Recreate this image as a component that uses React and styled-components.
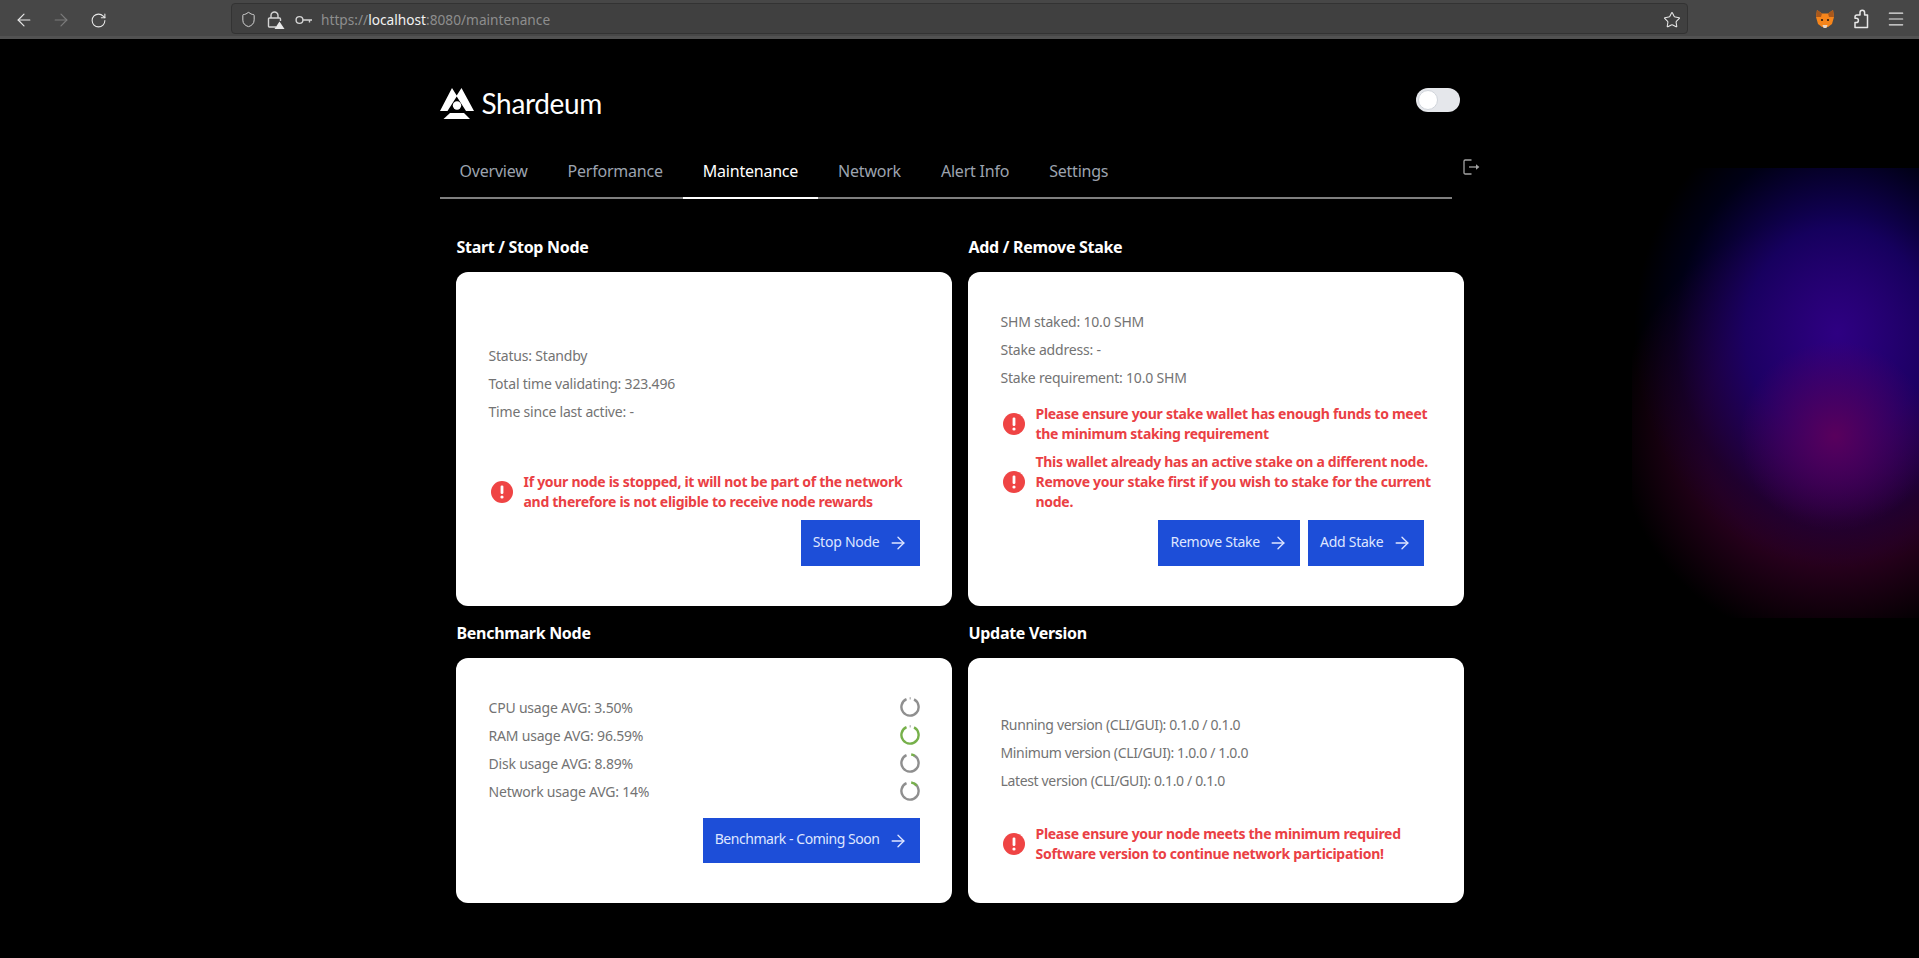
import React from 'react';
import styled, { createGlobalStyle } from 'styled-components';
import { ArrowLeft, ArrowRight, RotateCw, Shield, Star, Menu } from 'lucide-react';

const GlobalStyle = createGlobalStyle`
  html, body {
    margin: 0;
    padding: 0;
    background: #000;
    overflow: hidden;
  }
  body {
    font-family: "Noto Sans", "Open Sans", sans-serif;
    font-size: 14px;
  }
  * { box-sizing: border-box; }
`;

const Page = styled.div`
  position: relative;
  width: 100%;
  height: 958px;
  overflow: hidden;
  background: #000;
`;

const Glow = styled.div`
  position: absolute;
  left: 1632px;
  top: 168px;
  width: 420px;
  height: 450px;
  background:
    radial-gradient(circle 95px at 203px 268px, rgba(92, 0, 92, 0.95) 0%, rgba(80, 0, 100, 0) 100%),
    radial-gradient(ellipse 203px 235px at 205px 165px, #2e0082 0%, rgba(24, 0, 115, 0.8) 45%, rgba(0, 0, 70, 0.3) 80%, rgba(0, 0, 50, 0) 100%),
    radial-gradient(ellipse 215px 215px at 200px 262px, rgba(66, 0, 62, 0.95) 0%, rgba(46, 0, 34, 0.9) 60%, rgba(30, 0, 20, 0.55) 85%, rgba(16, 0, 10, 0) 100%);
`;

const BrowserBar = styled.div`
  position: relative;
  height: 39px;
  background: #474747;
  border-bottom: 3px solid #525252;
  display: flex;
  align-items: center;
`;

const NavIcons = styled.div`
  display: flex;
  align-items: center;
  gap: 17px;
  width: 231px;
  padding-left: 14px;
  margin-top: 4px;
`;

const ChromeIcon = styled.span`
  display: flex;
  width: 20px;
  height: 20px;
  align-items: center;
  justify-content: center;
  color: ${p => (p.$dim ? '#7c7c7c' : '#e8e8e8')};
`;

const UrlBar = styled.div`
  width: 1457px;
  height: 31px;
  background: #404040;
  border: 1px solid #333;
  border-radius: 4px;
  display: flex;
  align-items: center;
  padding: 3px 5px 0 8px;
  color: #a8a8a8;
`;

const UrlIcons = styled.div`
  display: flex;
  align-items: center;
  gap: 10px;
  width: 81px;
  color: #d4d4d4;
`;

const UrlText = styled.div`
  flex: 1;
  font-size: 13.7px;
  color: #8e8e8e;
  white-space: nowrap;
  b {
    font-weight: 400;
    color: #f2f2f2;
  }
`;

const Extensions = styled.div`
  flex: 1;
  display: flex;
  justify-content: flex-end;
  align-items: center;
  gap: 16px;
  padding-right: 13px;
  margin-top: 2px;
`;

const Shell = styled.main`
  position: relative;
  width: 1040px;
  margin: 0 auto;
`;

const Header = styled.header`
  display: flex;
  justify-content: space-between;
  align-items: flex-start;
  padding: 49px 20px 0 0;
  height: 106px;
`;

const Brand = styled.div`
  display: flex;
  align-items: center;
  gap: 8px;
  height: 31px;
`;

const BrandName = styled.span`
  font-family: "Lato", sans-serif;
  font-size: 28px;
  line-height: 28px;
  font-weight: 400;
  color: #fff;
  letter-spacing: -0.35px;
  margin-top: -2px;
`;

const Toggle = styled.div`
  width: 44px;
  height: 24px;
  border-radius: 12px;
  background: #e5e7eb;
  padding: 2px;
`;

const Knob = styled.div`
  width: 20px;
  height: 20px;
  border-radius: 50%;
  background: #fff;
  border: 1px solid #d1d5db;
`;

const NavRow = styled.div`
  display: flex;
  align-items: flex-start;
`;

const Tabs = styled.nav`
  width: 1012px;
  display: flex;
  border-bottom: 2px solid #7f7f7f;
`;

const Tab = styled.a`
  padding: 14px 20px;
  line-height: 24px;
  font-size: 16px;
  letter-spacing: -0.22px;
  margin-bottom: -2px;
  color: ${p => (p.$active ? '#fff' : '#9ca3af')};
  border-bottom: 2px solid ${p => (p.$active ? '#fff' : 'transparent')};
`;

const LogoutButton = styled.button`
  margin: 14px 0 0 11px;
  padding: 0;
  width: 17px;
  height: 16px;
  background: none;
  border: none;
  display: flex;
  color: #a3a3a3;
`;

const Grid = styled.div`
  display: grid;
  grid-template-columns: 496px 496px;
  grid-template-rows: 371px 282px;
  column-gap: 16px;
  row-gap: 15px;
  padding: 0 16px;
  margin-top: 36px;
`;

const Section = styled.section`
  display: flex;
  flex-direction: column;
`;

const SectionTitle = styled.h2`
  margin: 0 0 13px;
  padding-left: 1px;
  font-size: 16px;
  line-height: 24px;
  font-weight: 700;
  letter-spacing: -0.3px;
  color: #fff;
`;

const Card = styled.div`
  flex: 1;
  background: #fff;
  border-radius: 12px;
  padding: 36px 32px ${p => p.$bottom || 40}px;
  display: flex;
  flex-direction: column;
`;

const Body = styled.div`
  flex: 1;
  display: flex;
  flex-direction: column;
  justify-content: center;
`;

const Line = styled.div`
  height: 28px;
  flex-shrink: 0;
  padding-bottom: 2px;
  padding-left: 1px;
  display: flex;
  align-items: center;
  justify-content: space-between;
  color: #737373;
  font-size: 14px;
  letter-spacing: ${p => (p.$tight ? -0.35 : -0.2)}px;
  white-space: nowrap;
`;

const Alerts = styled.div`
  margin-top: 12px;
  display: flex;
  flex-direction: column;
  gap: 8px;
`;

const Alert = styled.div`
  display: flex;
  align-items: center;
  gap: 11px;
  padding-left: 3px;
  color: #ea4044;
  font-size: 14px;
  line-height: 20px;
  font-weight: 700;
  letter-spacing: -0.29px;
  white-space: nowrap;
`;

const Actions = styled.div`
  display: flex;
  justify-content: flex-end;
  gap: 8px;
  margin-top: ${p => p.$top || 8}px;
  padding-right: ${p => p.$inset || 0}px;
`;

const Button = styled.button`
  height: ${p => (p.$compact ? 45 : 46)}px;
  padding: 0 12px;
  border: none;
  background: #1d4ed8;
  color: #dfe6ff;
  font-family: inherit;
  font-size: 14px;
  letter-spacing: ${p => (p.$compact ? -0.45 : -0.25)}px;
  display: flex;
  align-items: center;
  gap: 8px;
  white-space: nowrap;
`;

const ButtonLabel = styled.span`
  margin-top: -4px;
`;

const Warn = () => (
  <svg width="22" height="22" viewBox="0 0 22 22" style={{ flexShrink: 0 }}>
    <circle cx="11" cy="11" r="11" fill="#ef4444" />
    <rect x="9.6" y="4.5" width="2.8" height="8.5" rx="1.2" fill="#fff" />
    <circle cx="11" cy="16" r="1.6" fill="#fff" />
  </svg>
);

const polar = (deg, r) => {
  const a = ((deg - 90) * Math.PI) / 180;
  return [10 + r * Math.cos(a), 10 + r * Math.sin(a)];
};

// grey ring with a gap at the top, the mark shows the value
const Gauge = ({ percent, ring, mark }) => {
  const r = 8.6;
  const [x1, y1] = polar(28, r);
  const [x2, y2] = polar(336, r);
  const [m1, m2] = polar(percent > 5 ? 8 : -2, r);
  const [m3, m4] = polar(Math.max(percent * 3.6, 4), r);
  return (
    <svg width="20" height="20" viewBox="0 0 20 20" fill="none" strokeWidth="2.4">
      <path d={`M${x1} ${y1} A${r} ${r} 0 1 1 ${x2} ${y2}`} stroke={ring} />
      <path d={`M${m1} ${m2} A${r} ${r} 0 0 1 ${m3} ${m4}`} stroke={mark} />
    </svg>
  );
};

const LockWarn = () => (
  <svg width="18" height="20" viewBox="0 0 18 20" fill="none" stroke="#d4d4d4" strokeWidth="1.4">
    <path d="M4 8V5.5a3.5 3.5 0 0 1 7 0V8" />
    <path d="M9 17H2.5a1 1 0 0 1-1-1V9a1 1 0 0 1 1-1h10a1 1 0 0 1 1 1v2" />
    <path d="M12.5 11.5 17.5 19H7.5Z" fill="#e8e8e8" stroke="none" />
  </svg>
);

const KeyIcon = () => (
  <svg width="18" height="12" viewBox="0 0 18 12" fill="none" stroke="#d4d4d4" strokeWidth="1.4">
    <circle cx="4.5" cy="6" r="3.4" />
    <path d="M8 6H17M14.5 6V8.5" />
  </svg>
);

const FoxIcon = () => (
  <svg width="18" height="20" viewBox="0 0 18 20">
    <path d="M1 1 6 4.5H12L17 1 18 8 16 15 12 18H6L2 15 0 8Z" fill="#f6851b" />
    <path d="M1 1 6 4.5 5 8 0 8ZM17 1 12 4.5 13 8 18 8Z" fill="#a9581c" />
    <path d="M6.5 16H11.5L10.5 19H7.5Z" fill="#e8d5c5" />
    <circle cx="6" cy="11" r="1.1" fill="#2b1a10" />
    <circle cx="12" cy="11" r="1.1" fill="#2b1a10" />
  </svg>
);

const PuzzleIcon = () => (
  <svg width="18" height="20" viewBox="0 0 18 20" fill="none" stroke="#e8e8e8" strokeWidth="1.5" strokeLinejoin="round">
    <path d="M6 6H9V3.6a2.3 2.3 0 0 1 4.6 0V6H16.5V18.5H4V13.6H5.2a2.2 2.2 0 0 0 0-4.4H4V8a2 2 0 0 1 2-2Z" />
  </svg>
);

const LogoMark = () => (
  <svg width="34" height="31" viewBox="0 0 34 31" fill="#fff">
    <path fillRule="evenodd" d="M0 23 12 0 16.7 7.5 21.5 0 34 23H26L16.7 8.5 7.5 23Z" />
    <circle cx="17" cy="17.5" r="4.2" />
    <path d="M10 25H24L30 31H3.5Z" />
  </svg>
);

const LogoutIcon = () => (
  <svg width="17" height="16" viewBox="0 0 17 16" fill="none" stroke="currentColor" strokeWidth="1.3">
    <path d="M8.5 1H2.2A1.2 1.2 0 0 0 1 2.2v11.6A1.2 1.2 0 0 0 2.2 15h6.3" />
    <path d="M6 8H13" />
    <path d="M13 5.2 16.4 8 13 10.8Z" fill="currentColor" stroke="none" />
  </svg>
);

const tabs = ['Overview', 'Performance', 'Maintenance', 'Network', 'Alert Info', 'Settings'];

const usage = [
  { label: 'CPU usage AVG: 3.50%', percent: 0.5, ring: '#8f8f8f', mark: '#8f8f8f' },
  { label: 'RAM usage AVG: 96.59%', percent: 0.5, ring: '#76b04a', mark: '#8f8f8f' },
  { label: 'Disk usage AVG: 8.89%', percent: 8.89, ring: '#8f8f8f', mark: '#76b04a' },
  { label: 'Network usage AVG: 14%', percent: 14, ring: '#8f8f8f', mark: '#76b04a' },
];

const Action = ({ children, compact }) => (
  <Button $compact={compact}>
    <ButtonLabel>{children}</ButtonLabel>
    <ArrowRight size={20} strokeWidth={1.6} />
  </Button>
);

const App = () => {
  return (
    <Page>
      <GlobalStyle />
      <Glow />
      <BrowserBar>
        <NavIcons>
          <ChromeIcon><ArrowLeft size={20} strokeWidth={1.4} /></ChromeIcon>
          <ChromeIcon $dim><ArrowRight size={20} strokeWidth={1.4} /></ChromeIcon>
          <ChromeIcon><RotateCw size={17} strokeWidth={1.5} /></ChromeIcon>
        </NavIcons>
        <UrlBar>
          <UrlIcons>
            <Shield size={17} strokeWidth={1.4} />
            <LockWarn />
            <KeyIcon />
          </UrlIcons>
          <UrlText>https://<b>localhost</b>:8080/maintenance</UrlText>
          <ChromeIcon><Star size={18} strokeWidth={1.4} /></ChromeIcon>
        </UrlBar>
        <Extensions>
          <FoxIcon />
          <ChromeIcon><PuzzleIcon /></ChromeIcon>
          <ChromeIcon><Menu size={20} strokeWidth={1.4} /></ChromeIcon>
        </Extensions>
      </BrowserBar>

      <Shell>
        <Header>
          <Brand>
            <LogoMark />
            <BrandName>Shardeum</BrandName>
          </Brand>
          <Toggle><Knob /></Toggle>
        </Header>

        <NavRow>
          <Tabs>
            {tabs.map(t => (
              <Tab key={t} $active={t === 'Maintenance'}>{t}</Tab>
            ))}
          </Tabs>
          <LogoutButton><LogoutIcon /></LogoutButton>
        </NavRow>

        <Grid>
          <Section>
            <SectionTitle>Start / Stop Node</SectionTitle>
            <Card>
              <Body>
                <Line>Status: Standby</Line>
                <Line>Total time validating: 323.496</Line>
                <Line>Time since last active: -</Line>
              </Body>
              <Alerts>
                <Alert>
                  <Warn />
                  <div>If your node is stopped, it will not be part of the network<br />and therefore is not eligible to receive node rewards</div>
                </Alert>
              </Alerts>
              <Actions>
                <Action>Stop Node</Action>
              </Actions>
            </Card>
          </Section>

          <Section>
            <SectionTitle>Add / Remove Stake</SectionTitle>
            <Card>
              <Body>
                <Line>SHM staked: 10.0 SHM</Line>
                <Line>Stake address: -</Line>
                <Line>Stake requirement: 10.0 SHM</Line>
              </Body>
              <Alerts>
                <Alert>
                  <Warn />
                  <div>Please ensure your stake wallet has enough funds to meet<br />the minimum staking requirement</div>
                </Alert>
                <Alert>
                  <Warn />
                  <div>This wallet already has an active stake on a different node.<br />Remove your stake first if you wish to stake for the current<br />node.</div>
                </Alert>
              </Alerts>
              <Actions $inset={8}>
                <Action>Remove Stake</Action>
                <Action>Add Stake</Action>
              </Actions>
            </Card>
          </Section>

          <Section>
            <SectionTitle>Benchmark Node</SectionTitle>
            <Card>
              <Body>
                {usage.map(u => (
                  <Line key={u.label}>
                    {u.label}
                    <Gauge percent={u.percent} ring={u.ring} mark={u.mark} />
                  </Line>
                ))}
              </Body>
              <Actions $top={12}>
                <Action compact>Benchmark - Coming Soon</Action>
              </Actions>
            </Card>
          </Section>

          <Section>
            <SectionTitle>Update Version</SectionTitle>
            <Card $bottom={39}>
              <Body>
                <Line $tight>Running version (CLI/GUI): 0.1.0 / 0.1.0</Line>
                <Line $tight>Minimum version (CLI/GUI): 1.0.0 / 1.0.0</Line>
                <Line $tight>Latest version (CLI/GUI): 0.1.0 / 0.1.0</Line>
              </Body>
              <Alerts>
                <Alert>
                  <Warn />
                  <div>Please ensure your node meets the minimum required<br />Software version to continue network participation!</div>
                </Alert>
              </Alerts>
            </Card>
          </Section>
        </Grid>
      </Shell>
    </Page>
  );
};

export default App;
